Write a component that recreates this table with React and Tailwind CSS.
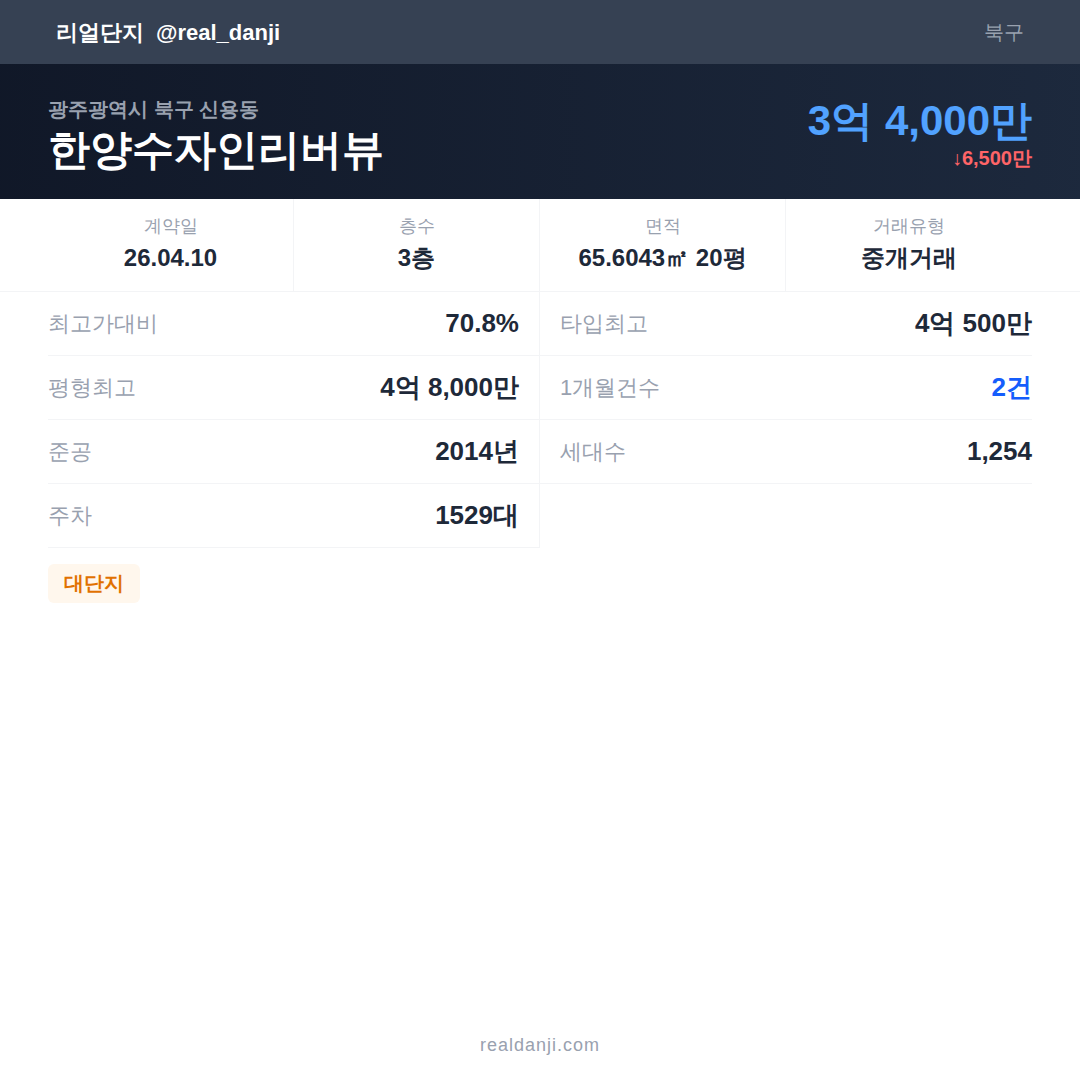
import React from 'react'

const stats = [
  { label: '계약일', value: '26.04.10' },
  { label: '층수', value: '3층' },
  { label: '면적', value: '65.6043㎡ 20평' },
  { label: '거래유형', value: '중개거래' },
]

const leftRows = [
  { label: '최고가대비', value: '70.8%' },
  { label: '평형최고', value: '4억 8,000만' },
  { label: '준공', value: '2014년' },
  { label: '주차', value: '1529대' },
]

const rightRows = [
  { label: '타입최고', value: '4억 500만' },
  { label: '1개월건수', value: '2건', blue: true },
  { label: '세대수', value: '1,254' },
]

const Row = ({ row, side }) => (
  <div className={`h-16 flex items-center justify-between border-b border-gray-100 ${side === 'left' ? 'pr-5' : 'pl-5'}`}>
    <span className="text-[22px] text-gray-400">{row.label}</span>
    <span className={`text-[26px] font-bold ${row.blue ? 'text-blue-600' : 'text-gray-800'}`}>{row.value}</span>
  </div>
)

const App = () => {
  return (
    <div
      className="w-[1080px] h-[1080px] bg-white flex flex-col"
      style={{ fontFamily: '"Liberation Sans", sans-serif' }}
    >
      {/* top bar */}
      <div className="h-16 bg-gray-700 flex items-center justify-between px-14">
        <div className="flex items-center gap-3 text-white font-bold text-[22px]">
          <span>리얼단지</span>
          <span>@real_danji</span>
        </div>
        <span className="text-[20px] text-gray-400">북구</span>
      </div>

      {/* hero */}
      <div className="h-[135px] bg-linear-to-r from-gray-900 to-slate-800 px-12 flex items-center justify-between">
        <div className="flex flex-col pt-[12px]">
          <span className="text-[20px] font-bold text-gray-400 leading-none">광주광역시 북구 신용동</span>
          <span className="text-[42px] font-bold text-white leading-tight mt-[5px]">한양수자인리버뷰</span>
        </div>
        <div className="flex flex-col items-end">
          <span className="text-[42px] font-bold text-blue-400 leading-tight">3억 4,000만</span>
          <span className="text-[20px] font-bold text-red-400 leading-none">↓6,500만</span>
        </div>
      </div>

      {/* stats */}
      <div className="border-b border-gray-100">
        <div className="mx-12 grid grid-cols-4 h-[92px]">
          {stats.map((s, i) => (
            <div key={s.label} className={`flex flex-col items-center justify-center ${i < 3 ? 'border-r border-gray-100' : ''}`}>
              <span className="text-[18px] text-gray-400 leading-none">{s.label}</span>
              <span className="text-[24px] font-bold text-gray-800 mt-[8px] leading-tight">{s.value}</span>
            </div>
          ))}
        </div>
      </div>

      {/* details */}
      <div className="mx-12 grid grid-cols-2">
        <div className="border-r border-gray-100">
          {leftRows.map((r) => <Row key={r.label} row={r} side="left" />)}
        </div>
        <div>
          {rightRows.map((r) => <Row key={r.label} row={r} side="right" />)}
        </div>
      </div>

      <div className="mx-12 mt-4">
        <span className="inline-block bg-orange-50 text-amber-600 font-bold text-[20px] px-4 py-[7px] rounded-md leading-[25px]">대단지</span>
      </div>

      <div className="mt-auto pb-[21px] text-center text-[18px] text-gray-400 tracking-[1px]">realdanji.com</div>
    </div>
  )
}

export default App
